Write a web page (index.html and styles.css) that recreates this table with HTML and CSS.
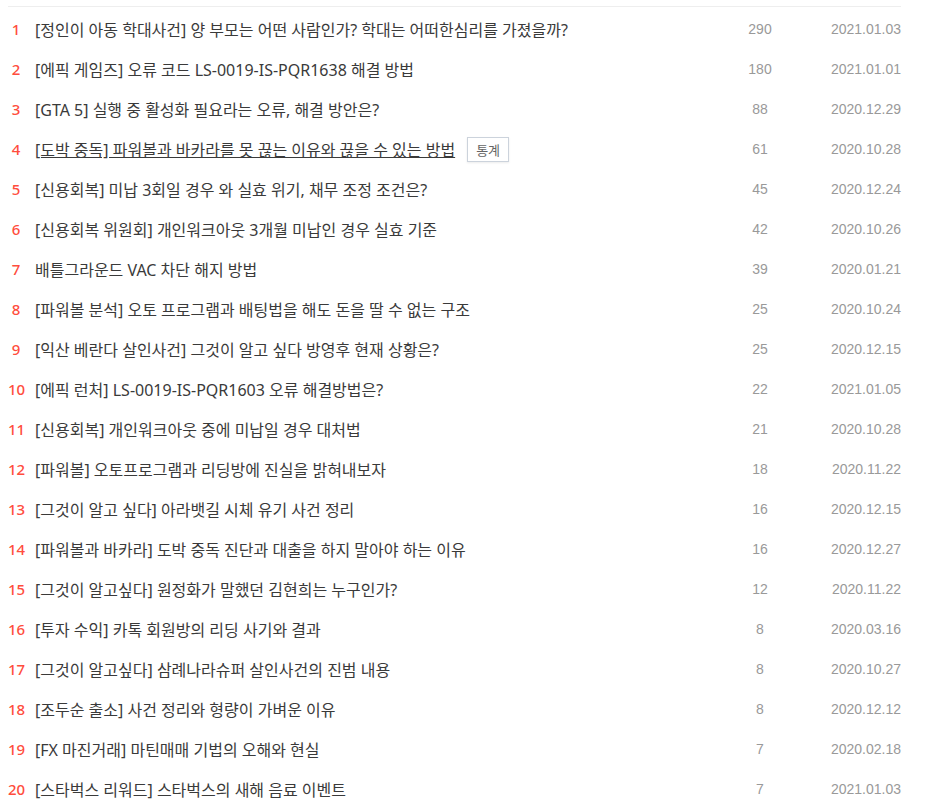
FILE: index.html
```html
<!DOCTYPE html>
<html lang="ko">
<head>
    <meta charset="UTF-8">
    <meta name="viewport" content="width=device-width, initial-scale=1.0">
    <title>인기글 목록</title>
    <link rel="stylesheet" href="styles.css">
</head>
<body>
    <ul class="post-list">
        <li class="post">
            <span class="rank">1</span>
            <span class="title"><a href="#">[정인이 아동 학대사건] 양 부모는 어떤 사람인가? 학대는 어떠한심리를 가졌을까?</a></span>
            <span class="count">290</span>
            <span class="date">2021.01.03</span>
        </li>
        <li class="post">
            <span class="rank">2</span>
            <span class="title"><a href="#">[에픽 게임즈] 오류 코드 LS-0019-IS-PQR1638 해결 방법</a></span>
            <span class="count">180</span>
            <span class="date">2021.01.01</span>
        </li>
        <li class="post">
            <span class="rank">3</span>
            <span class="title"><a href="#">[GTA 5] 실행 중 활성화 필요라는 오류, 해결 방안은?</a></span>
            <span class="count">88</span>
            <span class="date">2020.12.29</span>
        </li>
        <li class="post hover">
            <span class="rank">4</span>
            <span class="title"><a href="#">[도박 중독] 파워볼과 바카라를 못 끊는 이유와 끊을 수 있는 방법</a><button class="stat-btn">통계</button></span>
            <span class="count">61</span>
            <span class="date">2020.10.28</span>
        </li>
        <li class="post">
            <span class="rank">5</span>
            <span class="title"><a href="#">[신용회복] 미납 3회일 경우 와 실효 위기, 채무 조정 조건은?</a></span>
            <span class="count">45</span>
            <span class="date">2020.12.24</span>
        </li>
        <li class="post">
            <span class="rank">6</span>
            <span class="title"><a href="#">[신용회복 위원회] 개인워크아웃 3개월 미납인 경우 실효 기준</a></span>
            <span class="count">42</span>
            <span class="date">2020.10.26</span>
        </li>
        <li class="post">
            <span class="rank">7</span>
            <span class="title"><a href="#">배틀그라운드 VAC 차단 해지 방법</a></span>
            <span class="count">39</span>
            <span class="date">2020.01.21</span>
        </li>
        <li class="post">
            <span class="rank">8</span>
            <span class="title"><a href="#">[파워볼 분석] 오토 프로그램과 배팅법을 해도 돈을 딸 수 없는 구조</a></span>
            <span class="count">25</span>
            <span class="date">2020.10.24</span>
        </li>
        <li class="post">
            <span class="rank">9</span>
            <span class="title"><a href="#">[익산 베란다 살인사건] 그것이 알고 싶다 방영후 현재 상황은?</a></span>
            <span class="count">25</span>
            <span class="date">2020.12.15</span>
        </li>
        <li class="post">
            <span class="rank">10</span>
            <span class="title"><a href="#">[에픽 런처] LS-0019-IS-PQR1603 오류 해결방법은?</a></span>
            <span class="count">22</span>
            <span class="date">2021.01.05</span>
        </li>
        <li class="post">
            <span class="rank">11</span>
            <span class="title"><a href="#">[신용회복] 개인워크아웃 중에 미납일 경우 대처법</a></span>
            <span class="count">21</span>
            <span class="date">2020.10.28</span>
        </li>
        <li class="post">
            <span class="rank">12</span>
            <span class="title"><a href="#">[파워볼] 오토프로그램과 리딩방에 진실을 밝혀내보자</a></span>
            <span class="count">18</span>
            <span class="date">2020.11.22</span>
        </li>
        <li class="post">
            <span class="rank">13</span>
            <span class="title"><a href="#">[그것이 알고 싶다] 아라뱃길 시체 유기 사건 정리</a></span>
            <span class="count">16</span>
            <span class="date">2020.12.15</span>
        </li>
        <li class="post">
            <span class="rank">14</span>
            <span class="title"><a href="#">[파워볼과 바카라] 도박 중독 진단과 대출을 하지 말아야 하는 이유</a></span>
            <span class="count">16</span>
            <span class="date">2020.12.27</span>
        </li>
        <li class="post">
            <span class="rank">15</span>
            <span class="title"><a href="#">[그것이 알고싶다] 원정화가 말했던 김현희는 누구인가?</a></span>
            <span class="count">12</span>
            <span class="date">2020.11.22</span>
        </li>
        <li class="post">
            <span class="rank">16</span>
            <span class="title"><a href="#">[투자 수익] 카톡 회원방의 리딩 사기와 결과</a></span>
            <span class="count">8</span>
            <span class="date">2020.03.16</span>
        </li>
        <li class="post">
            <span class="rank">17</span>
            <span class="title"><a href="#">[그것이 알고싶다] 삼례나라슈퍼 살인사건의 진범 내용</a></span>
            <span class="count">8</span>
            <span class="date">2020.10.27</span>
        </li>
        <li class="post">
            <span class="rank">18</span>
            <span class="title"><a href="#">[조두순 출소] 사건 정리와 형량이 가벼운 이유</a></span>
            <span class="count">8</span>
            <span class="date">2020.12.12</span>
        </li>
        <li class="post">
            <span class="rank">19</span>
            <span class="title"><a href="#">[FX 마진거래] 마틴매매 기법의 오해와 현실</a></span>
            <span class="count">7</span>
            <span class="date">2020.02.18</span>
        </li>
        <li class="post">
            <span class="rank">20</span>
            <span class="title"><a href="#">[스타벅스 리워드] 스타벅스의 새해 음료 이벤트</a></span>
            <span class="count">7</span>
            <span class="date">2021.01.03</span>
        </li>
    </ul>
</body>
</html>
```

FILE: styles.css
```css
body {
    margin: 0;
    padding: 6px 45px 0 8px;
    background: #fff;
    font-family: "Noto Sans", "Noto Sans CJK KR", sans-serif;
}
.post-list {
    list-style: none;
    margin: 0;
    padding: 2px 0 0;
    border-top: 1px solid #eee;
}
.post {
    display: flex;
    align-items: center;
    height: 40px;
}
.rank {
    width: 16px;
    flex: none;
    text-align: center;
    color: #ff4d3d;
    font-size: 15px;
    font-weight: 500;
}
.title {
    flex: 1;
    display: flex;
    align-items: center;
    margin-left: 11px;
    font-size: 16px;
    white-space: nowrap;
}
.title a {
    color: #3a3a3a;
    text-decoration: none;
}
.post.hover .title a {
    text-decoration: underline;
}
.stat-btn {
    margin-left: 12px;
    height: 25px;
    padding: 0 8px;
    background: #fff;
    border: 1px solid #ccd3dc;
    box-shadow: 0 1px 2px rgba(0,0,0,0.08);
    color: #666;
    font-family: "Noto Sans CJK KR", sans-serif;
    font-size: 13px;
    cursor: pointer;
}
.count {
    width: 60px;
    flex: none;
    text-align: center;
    color: #999;
    font-family: "Liberation Sans", Arial, sans-serif;
    font-size: 14px;
}
.date {
    width: 111px;
    flex: none;
    text-align: right;
    color: #999;
    font-family: "Liberation Sans", Arial, sans-serif;
    font-size: 14px;
}
```
